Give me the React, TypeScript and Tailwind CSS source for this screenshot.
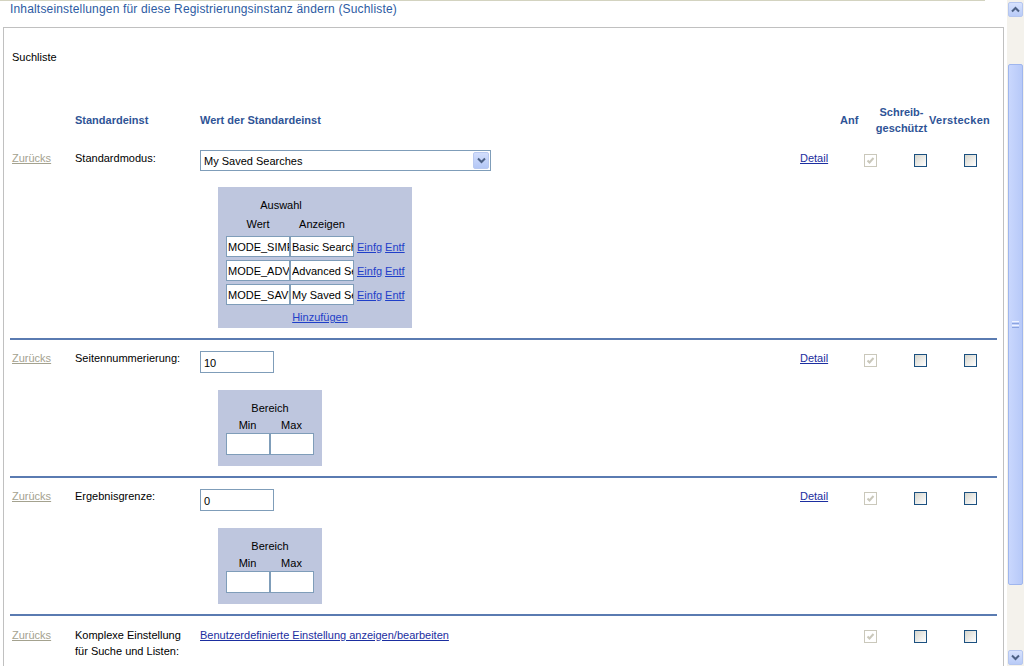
import React from 'react';

const font = "font-['Liberation_Sans',Arial,sans-serif]";

const CheckDisabled = () => (
  <span className="flex h-[13px] w-[13px] items-center justify-center border border-[#cac8bb] bg-white">
    <svg width="9" height="9" viewBox="0 0 9 9">
      <polyline points="1.5,4.5 3.5,6.5 7.5,2" fill="none" stroke="#cac8bb" strokeWidth="2" />
    </svg>
  </span>
);

const CheckBox = () => (
  <span className="block h-[13px] w-[13px] border border-[#1c5180] bg-linear-to-br from-[#d6d5cc] to-white" />
);

const Zurueck = () => <span className="text-[#a4a28f] underline">Zurücks</span>;

const RightCells = ({ detail = true, top = 4 }: { detail?: boolean; top?: number }) => (
  <div className="flex shrink-0">
    <div className="w-[64px] shrink-0">
      {detail && <span className="text-[#1b2ea0] underline">Detail</span>}
    </div>
    {[0, 1, 2].map((i) => (
      <div
        key={i}
        className={`shrink-0 ${i === 2 ? 'w-[20px]' : 'w-[50px]'} ${top === 4 ? 'pt-[4px]' : 'pt-[3px]'}`}
      >
        {i === 0 ? <CheckDisabled /> : <CheckBox />}
      </div>
    ))}
  </div>
);

const TextInput = ({ value, w }: { value: string; w: string }) => (
  <input
    readOnly
    value={value}
    className={`${w} h-[21px] border border-[#7f9db9] bg-white pl-[1px] text-[11px] text-black outline-none`}
  />
);

const RangeBox = () => (
  <div className="ml-[18px] mt-[17px] w-[104px] bg-[#bec6de] px-[8px] pt-[11px] pb-[11px] text-black">
    <div className="text-center leading-[14px]">Bereich</div>
    <div className="mt-[2px] flex leading-[16px]">
      <div className="w-[43px] text-center">Min</div>
      <div className="ml-[1px] w-[43px] text-center">Max</div>
    </div>
    <div className="flex">
      <div className="h-[22px] w-[44px] border border-[#7f9db9] bg-white" />
      <div className="h-[22px] w-[44px] border border-[#7f9db9] bg-white" />
    </div>
  </div>
);

const Separator = () => <div className="h-[2px] bg-[#5a7bb1]" />;

const choices = [
  ['MODE_SIMPLE', 'Basic Search'],
  ['MODE_ADVANCED', 'Advanced Search'],
  ['MODE_SAVED', 'My Saved Searches'],
];

const Cols = ({ label, children }: { label: React.ReactNode; children: React.ReactNode }) => (
  <>
    <div className="w-[63px] shrink-0">
      <Zurueck />
    </div>
    <div className="w-[125px] shrink-0">{label}</div>
    <div className="w-[600px] shrink-0">{children}</div>
  </>
);

export default function App() {
  return (
    <div className={`${font} flex h-[666px] w-[1024px] overflow-hidden bg-white text-[11px] text-black`}>
      <div className="w-[1007px] shrink-0">
        <div className="h-[1px] w-[985px] bg-[#d3d3c0]" />
        <div className="h-[26px] pl-[10px] pt-[1px] text-[12px] leading-[14px] tracking-[0.17px] text-[#2d5ba3]">
          Inhaltseinstellungen für diese Registrierungsinstanz ändern (Suchliste)
        </div>
        <div className="ml-[3px] h-[700px] w-[1001px] border-l border-t border-r border-[#c0c0c0] px-[6px]">
          <div className="mt-[22px] pl-[2px] leading-[14px]">Suchliste</div>

          {/* headers */}
          <div className="mt-[40px] flex h-[32px] items-center pl-[2px] font-bold text-[#2f5496]">
            <div className="w-[63px] shrink-0" />
            <div className="w-[125px] shrink-0">Standardeinst</div>
            <div className="w-[600px] shrink-0">Wert der Standardeinst</div>
            <div className="w-[40px] shrink-0" />
            <div className="w-[34px] shrink-0">Anf</div>
            <div className="w-[55px] shrink-0 text-center leading-[16px]">
              Schreib-
              <br />
              geschützt
            </div>
            <div className="w-[64px] shrink-0 tracking-[0.3px]">Verstecken</div>
          </div>

          {/* Standardmodus */}
          <div className="mt-[14px] flex pl-[2px] leading-[16px]">
            <Cols label="Standardmodus:">
              <div className="flex h-[21px] w-[291px] items-center border border-[#7f9db9] bg-white pl-[3px]">
                <span className="flex-1">My Saved Searches</span>
                <span className="mr-[1px] flex h-[17px] w-[16px] items-center justify-center rounded-[2px] border border-[#b9c9f0] bg-linear-to-b from-[#d2defc] to-[#b4c7f6]">
                  <svg width="9" height="7" viewBox="0 0 9 7">
                    <polyline points="1,1.5 4.5,5 8,1.5" fill="none" stroke="#4d6185" strokeWidth="2" />
                  </svg>
                </span>
              </div>
              <div className="ml-[18px] mt-[16px] w-[194px] bg-[#bec6de] pb-[4px] pl-[8px] pt-[11px]">
                <div className="w-[110px] text-center leading-[14px]">Auswahl</div>
                <div className="mt-[5px] flex leading-[14px]">
                  <div className="w-[64px] text-center">Wert</div>
                  <div className="w-[64px] text-center">Anzeigen</div>
                </div>
                <div className="mt-[5px] flex flex-col gap-[3px]">
                  {choices.map(([v, d]) => (
                    <div key={v} className="flex items-center">
                      <TextInput value={v} w="w-[64px]" />
                      <TextInput value={d} w="w-[64px]" />
                      <span className="ml-[3px] text-[#1f3fc9] underline">Einfg</span>
                      <span className="ml-[3px] text-[#1f3fc9] underline">Entf</span>
                    </div>
                  ))}
                </div>
                <div className="mt-[5px] w-[188px] text-center leading-[14px]">
                  <span className="text-[#1f3fc9] underline">Hinzufügen</span>
                </div>
              </div>
            </Cols>
            <RightCells />
          </div>

          <div className="mt-[10px]">
            <Separator />
          </div>

          {/* Seitennummerierung */}
          <div className="mt-[11px] flex pl-[2px] leading-[14px]">
            <Cols label="Seitennummerierung:">
              <div className="h-[22px] w-[74px] border border-[#7f9db9] bg-white pl-[3px] pt-[4px]">10</div>
              <RangeBox />
            </Cols>
            <RightCells top={3} />
          </div>

          <div className="mt-[10px]">
            <Separator />
          </div>

          {/* Ergebnisgrenze */}
          <div className="mt-[11px] flex pl-[2px] leading-[14px]">
            <Cols label="Ergebnisgrenze:">
              <div className="h-[22px] w-[74px] border border-[#7f9db9] bg-white pl-[3px] pt-[4px]">0</div>
              <RangeBox />
            </Cols>
            <RightCells top={3} />
          </div>

          <div className="mt-[10px]">
            <Separator />
          </div>

          {/* Komplexe Einstellung */}
          <div className="mt-[11px] flex pl-[2px] leading-[16px]">
            <Cols
              label={
                <>
                  Komplexe Einstellung
                  <br />
                  für Suche und Listen:
                </>
              }
            >
              <span className="text-[#1b2ea0] underline">Benutzerdefinierte Einstellung anzeigen/bearbeiten</span>
            </Cols>
            <RightCells detail={false} top={3} />
          </div>
        </div>
      </div>

      {/* scrollbar */}
      <div className="flex h-[666px] w-[17px] shrink-0 flex-col bg-[#f4f2ec] pt-[2px]">
        <div className="ml-[1px] flex h-[15px] w-[15px] items-center justify-center rounded-[2px] border border-[#b5c6ef] bg-linear-to-b from-[#d7e2fd] to-[#b9cbf7]">
          <svg width="9" height="7" viewBox="0 0 9 7">
            <polyline points="1,5.5 4.5,2 8,5.5" fill="none" stroke="#4d6185" strokeWidth="2" />
          </svg>
        </div>
        <div className="h-[47px]" />
        <div className="ml-[1px] flex h-[521px] w-[15px] items-center justify-center rounded-[2px] border border-[#9fb6ee] bg-linear-to-r from-[#c9d7fd] to-[#b7c9f8]">
          <div className="flex flex-col gap-[1px]">
            <div className="h-[1px] w-[7px] bg-[#eef2fe]" />
            <div className="h-[1px] w-[7px] bg-[#8ca4e0]" />
            <div className="h-[1px] w-[7px] bg-[#eef2fe]" />
            <div className="h-[1px] w-[7px] bg-[#8ca4e0]" />
          </div>
        </div>
        <div className="flex-1" />
        <div className="mb-[1px] ml-[1px] flex h-[15px] w-[15px] items-center justify-center rounded-[2px] border border-[#b5c6ef] bg-linear-to-b from-[#d7e2fd] to-[#b9cbf7]">
          <svg width="9" height="7" viewBox="0 0 9 7">
            <polyline points="1,1.5 4.5,5 8,1.5" fill="none" stroke="#4d6185" strokeWidth="2" />
          </svg>
        </div>
      </div>
    </div>
  );
}
